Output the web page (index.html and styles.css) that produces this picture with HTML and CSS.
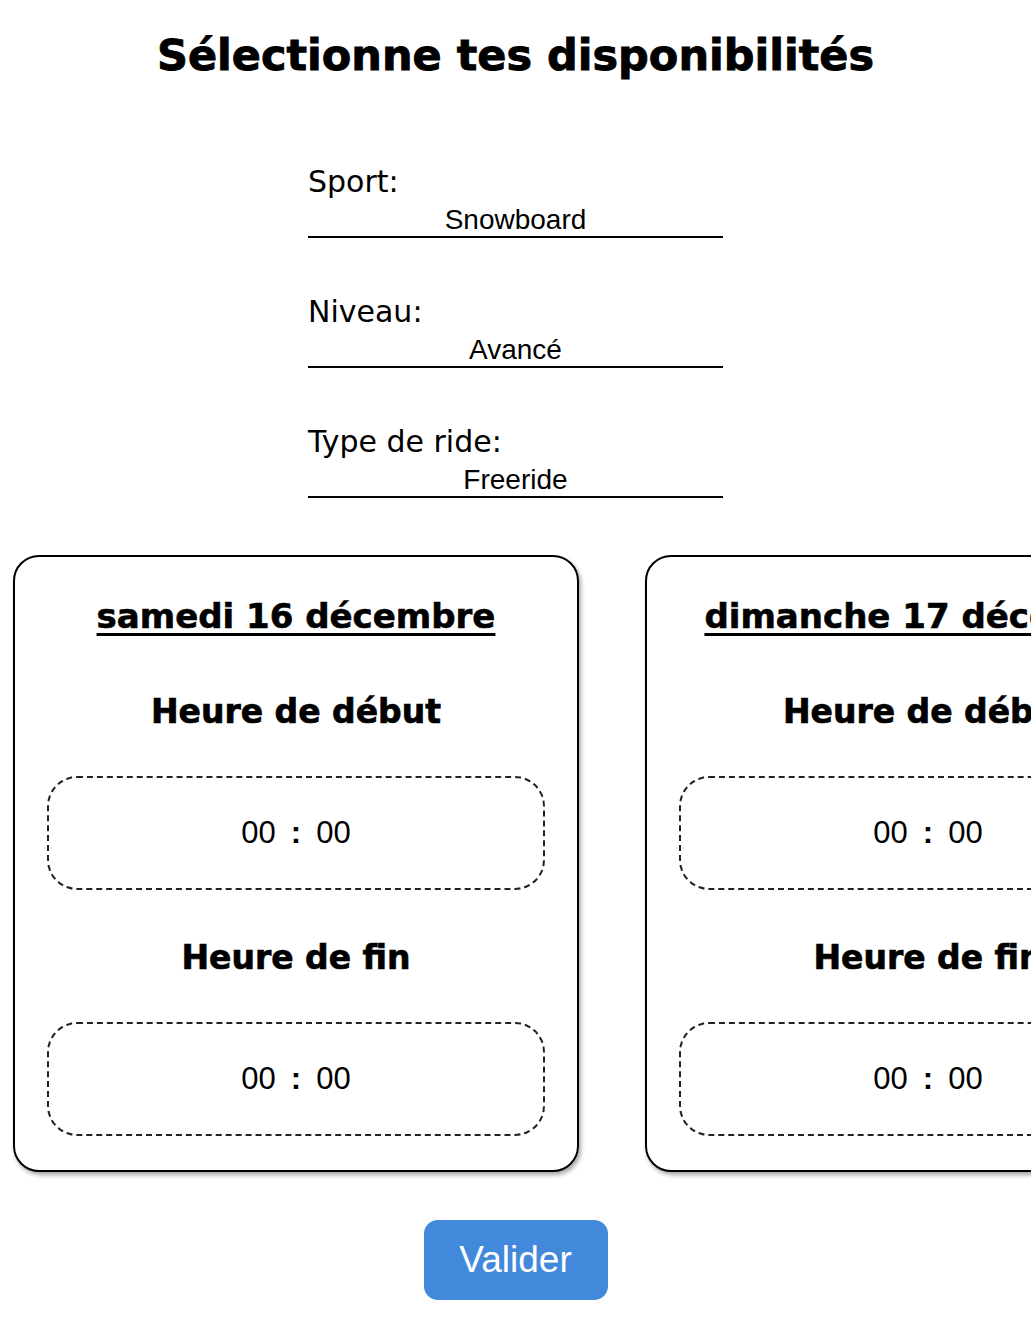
FILE: index.html
```
<!DOCTYPE html>
<html lang="fr">
<head>
<meta charset="utf-8">
<title>Sélectionne tes disponibilités</title>
<link rel="stylesheet" href="styles.css">
</head>
<body>
<h1 class="page-title">Sélectionne tes disponibilités</h1>

<div class="form">
  <div class="field">
    <div class="field-label">Sport:</div>
    <div class="field-value">Snowboard</div>
  </div>
  <div class="field">
    <div class="field-label">Niveau:</div>
    <div class="field-value">Avancé</div>
  </div>
  <div class="field">
    <div class="field-label">Type de ride:</div>
    <div class="field-value">Freeride</div>
  </div>
</div>

<div class="cards">
  <div class="card">
    <h2 class="card-title">samedi 16 décembre</h2>
    <h3 class="card-sub first">Heure de début</h3>
    <div class="time-box"><span>00</span><span class="colon">:</span><span>00</span></div>
    <h3 class="card-sub">Heure de fin</h3>
    <div class="time-box"><span>00</span><span class="colon">:</span><span>00</span></div>
  </div>
  <div class="card">
    <h2 class="card-title">dimanche 17 décembre</h2>
    <h3 class="card-sub first">Heure de début</h3>
    <div class="time-box"><span>00</span><span class="colon">:</span><span>00</span></div>
    <h3 class="card-sub">Heure de fin</h3>
    <div class="time-box"><span>00</span><span class="colon">:</span><span>00</span></div>
  </div>
</div>

<div class="actions">
  <button class="btn">Valider</button>
</div>
</body>
</html>
```
FILE: styles.css
```
html, body {
  margin: 0;
  padding: 0;
  background: #fff;
  color: #000;
}
body {
  font-family: "DejaVu Sans", sans-serif;
  overflow-x: hidden;
}
.page-title {
  margin: 0;
  padding-top: 30px;
  font-size: 43px;
  line-height: 50px;
  font-weight: 700;
  text-align: center;
  -webkit-text-stroke: 0.9px #000;
}
.form {
  width: 415px;
  margin: 85px auto 0;
}
.field {
  margin-bottom: 57px;
}
.field-label {
  font-size: 30px;
  line-height: 34px;
}
.field-value {
  margin-top: 4px;
  font-family: "Liberation Sans", Arial, sans-serif;
  font-size: 28px;
  line-height: 33px;
  text-align: center;
  border-bottom: 2px solid #000;
}
.cards {
  display: flex;
  gap: 66px;
  padding: 0 0 10px 13px;
  overflow: hidden;
}
.card {
  flex: 0 0 566px;
  box-sizing: border-box;
  border: 2px solid #000;
  border-radius: 26px;
  padding: 39px 32px 34px;
  box-shadow: 2px 3px 4px rgba(0, 0, 0, 0.35);
  text-align: center;
}
.card-title {
  margin: 0;
  font-size: 34px;
  line-height: 40px;
  font-weight: 700;
  text-decoration: underline;
  text-decoration-thickness: 3px;
  text-underline-offset: 5px;
  white-space: nowrap;
  -webkit-text-stroke: 0.6px #000;
}
.card-sub {
  margin: 48px 0 0;
  font-size: 33px;
  line-height: 40px;
  font-weight: 700;
  white-space: nowrap;
  -webkit-text-stroke: 0.7px #000;
}
.card-sub.first {
  margin-top: 56px;
}
.time-box {
  margin-top: 44px;
  height: 114px;
  box-sizing: border-box;
  border: 2px dashed #222;
  border-radius: 30px;
  display: flex;
  align-items: center;
  justify-content: center;
  gap: 15px;
  font-family: "Liberation Sans", Arial, sans-serif;
  font-size: 31px;
}
.colon {
  font-weight: 700;
}
.actions {
  display: flex;
  justify-content: center;
  margin-top: 38px;
}
.btn {
  width: 184px;
  height: 80px;
  border: none;
  border-radius: 14px;
  background: #4389db;
  color: #fff;
  font-family: "Liberation Sans", Arial, sans-serif;
  font-size: 37px;
  padding: 0;
}
```
